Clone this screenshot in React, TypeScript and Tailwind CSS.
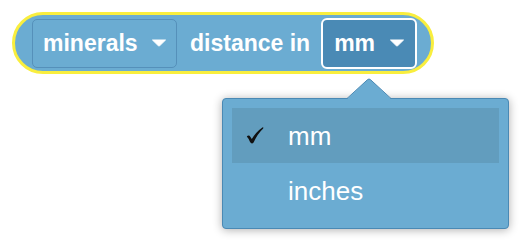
const Caret = () => (
  <svg width="16" height="8" viewBox="0 0 16 8" className="block">
    <path d="M1.5 1 H14.5 L8.8 6.6 Q8 7.3 7.2 6.6 Z" fill="#ffffff" stroke="#ffffff" strokeWidth="1" strokeLinejoin="round" />
  </svg>
)

const Check = () => (
  <svg width="18" height="17" viewBox="0 0 18 17" className="block">
    <path
      d="M0.8 9.4 Q2.2 7.8 3.6 8.8 L5.8 12 Q10 4.8 16.4 0.4 Q17.8 0 17.2 1.4 Q11.4 6.8 7.6 15.6 Q6.8 16.8 5.4 16.2 Q4.2 15.6 3.8 14.4 Q2.8 11.6 0.8 9.4 Z"
      fill="#111111"
    />
  </svg>
)

const App: React.FC = () => {
  const options = [
    { label: "mm", selected: true },
    { label: "inches", selected: false },
  ]

  return (
    <div className="relative h-[248px] w-[528px] overflow-hidden bg-white font-['Liberation_Sans',Arial,sans-serif]">
      <div className="pl-[12px] pt-[12px]">
        {/* Block with selection outline */}
        <div className="inline-flex h-[62px] items-center rounded-full border-[3px] border-[#f9ee3e] bg-[#6bacd2] pl-[17px] pr-[14px]">
          <div className="flex h-[49px] w-[145px] items-center rounded-[5px] border border-[#5590ba] pl-[10px]">
            <span className="text-[23px] font-bold leading-none text-white">minerals</span>
            <span className="ml-[13px]">
              <Caret />
            </span>
          </div>
          <span className="ml-[13px] text-[23px] font-bold leading-none text-white">distance in</span>
          <div className="ml-[11px] flex h-[51px] w-[96px] items-center rounded-[6px] border-2 border-white bg-[#4a8ab5] pl-[11px]">
            <span className="text-[23px] font-bold leading-none text-white">mm</span>
            <span className="ml-[14px]">
              <Caret />
            </span>
          </div>
        </div>
      </div>

      {/* Dropdown menu */}
      <div className="absolute left-[222px] top-[98px] h-[131px] w-[287px] rounded-[4px] border border-[#4a89b4] bg-[#6bacd2] px-[9px] pt-[9px] shadow-[0_1px_10px_rgba(0,0,0,0.32)]">
        {options.map((opt) => (
          <div
            key={opt.label}
            className={`flex h-[55px] items-center ${opt.selected ? "bg-[#629dbe]" : ""}`}
          >
            <span className="w-[56px] pl-[14px]">{opt.selected ? <Check /> : null}</span>
            <span className="text-[26px] leading-none text-white">{opt.label}</span>
          </div>
        ))}
      </div>

      {/* Menu pointer */}
      <svg className="absolute left-[345px] top-[78px]" width="48" height="23" viewBox="0 0 48 23">
        <path d="M1 23 L1 21 L2 21 L22.6 1.6 Q24 0.4 25.4 1.6 L46 21 L47 21 L47 23 Z" fill="#6bacd2" />
        <path d="M0 20.5 L2 20.5 L22.6 1.6 Q24 0.4 25.4 1.6 L46 20.5 L48 20.5" fill="none" stroke="#4a89b4" strokeWidth="1" />
      </svg>
    </div>
  )
}

export default App
